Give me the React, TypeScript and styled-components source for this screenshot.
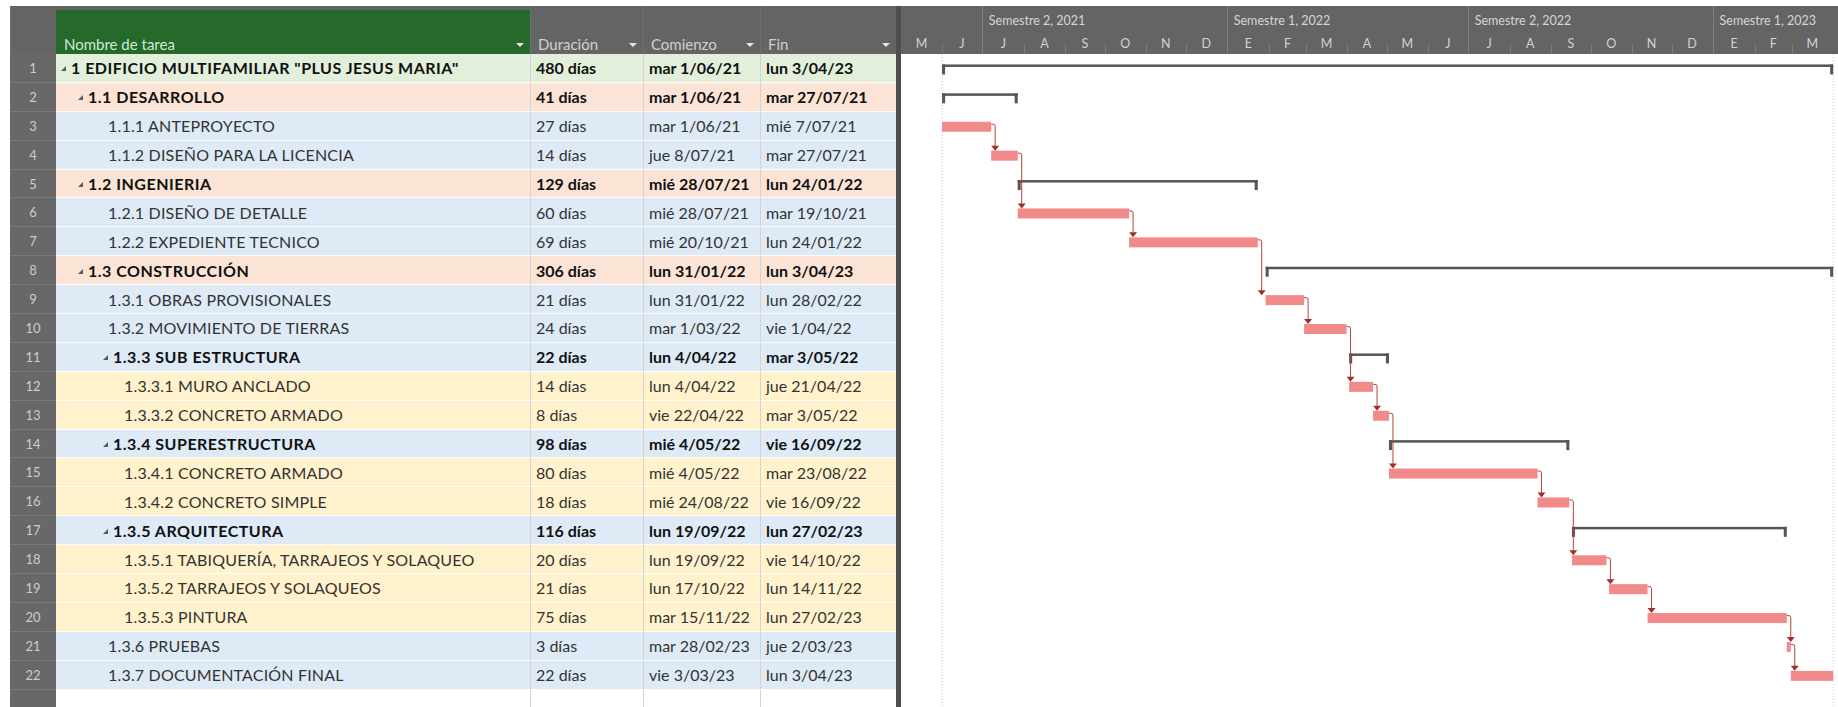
import React from "react";
import styled, { createGlobalStyle } from "styled-components";

const ROW_H = 28.9;
const HEAD_H = 48;
const DAY_W = 1.326;
const ORIGIN = Date.UTC(2021, 4, 1);
const COLS = "46px 474px 113px 117px 136px";

type Tone = "green" | "peach" | "blue" | "yellow";

const tones: Record<Tone, string> = {
  green: "#e2efda",
  peach: "#fbe4d6",
  blue: "#deeaf6",
  yellow: "#fff2cc",
};

interface ITask {
  name: string;
  level: number;
  summary?: boolean;
  dur: string;
  start: string;
  end: string;
  tone: Tone;
}

const tasks: ITask[] = [
  { name: '1 EDIFICIO MULTIFAMILIAR "PLUS JESUS MARIA"', level: 1, summary: true, dur: "480 días", start: "mar 1/06/21", end: "lun 3/04/23", tone: "green" },
  { name: "1.1 DESARROLLO", level: 2, summary: true, dur: "41 días", start: "mar 1/06/21", end: "mar 27/07/21", tone: "peach" },
  { name: "1.1.1 ANTEPROYECTO", level: 3, dur: "27 días", start: "mar 1/06/21", end: "mié 7/07/21", tone: "blue" },
  { name: "1.1.2 DISEÑO PARA LA LICENCIA", level: 3, dur: "14 días", start: "jue 8/07/21", end: "mar 27/07/21", tone: "blue" },
  { name: "1.2 INGENIERIA", level: 2, summary: true, dur: "129 días", start: "mié 28/07/21", end: "lun 24/01/22", tone: "peach" },
  { name: "1.2.1 DISEÑO DE DETALLE", level: 3, dur: "60 días", start: "mié 28/07/21", end: "mar 19/10/21", tone: "blue" },
  { name: "1.2.2 EXPEDIENTE TECNICO", level: 3, dur: "69 días", start: "mié 20/10/21", end: "lun 24/01/22", tone: "blue" },
  { name: "1.3 CONSTRUCCIÓN", level: 2, summary: true, dur: "306 días", start: "lun 31/01/22", end: "lun 3/04/23", tone: "peach" },
  { name: "1.3.1 OBRAS PROVISIONALES", level: 3, dur: "21 días", start: "lun 31/01/22", end: "lun 28/02/22", tone: "blue" },
  { name: "1.3.2 MOVIMIENTO DE TIERRAS", level: 3, dur: "24 días", start: "mar 1/03/22", end: "vie 1/04/22", tone: "blue" },
  { name: "1.3.3 SUB ESTRUCTURA", level: 3, summary: true, dur: "22 días", start: "lun 4/04/22", end: "mar 3/05/22", tone: "blue" },
  { name: "1.3.3.1 MURO ANCLADO", level: 4, dur: "14 días", start: "lun 4/04/22", end: "jue 21/04/22", tone: "yellow" },
  { name: "1.3.3.2 CONCRETO ARMADO", level: 4, dur: "8 días", start: "vie 22/04/22", end: "mar 3/05/22", tone: "yellow" },
  { name: "1.3.4 SUPERESTRUCTURA", level: 3, summary: true, dur: "98 días", start: "mié 4/05/22", end: "vie 16/09/22", tone: "blue" },
  { name: "1.3.4.1 CONCRETO ARMADO", level: 4, dur: "80 días", start: "mié 4/05/22", end: "mar 23/08/22", tone: "yellow" },
  { name: "1.3.4.2 CONCRETO SIMPLE", level: 4, dur: "18 días", start: "mié 24/08/22", end: "vie 16/09/22", tone: "yellow" },
  { name: "1.3.5 ARQUITECTURA", level: 3, summary: true, dur: "116 días", start: "lun 19/09/22", end: "lun 27/02/23", tone: "blue" },
  { name: "1.3.5.1 TABIQUERÍA, TARRAJEOS Y SOLAQUEO", level: 4, dur: "20 días", start: "lun 19/09/22", end: "vie 14/10/22", tone: "yellow" },
  { name: "1.3.5.2 TARRAJEOS Y SOLAQUEOS", level: 4, dur: "21 días", start: "lun 17/10/22", end: "lun 14/11/22", tone: "yellow" },
  { name: "1.3.5.3 PINTURA", level: 4, dur: "75 días", start: "mar 15/11/22", end: "lun 27/02/23", tone: "yellow" },
  { name: "1.3.6 PRUEBAS", level: 3, dur: "3 días", start: "mar 28/02/23", end: "jue 2/03/23", tone: "blue" },
  { name: "1.3.7 DOCUMENTACIÓN FINAL", level: 3, dur: "22 días", start: "vie 3/03/23", end: "lun 3/04/23", tone: "blue" },
];

// finish-to-start links, by row index
const links: [number, number][] = [
  [2, 3], [3, 5], [5, 6], [6, 8], [8, 9], [9, 11], [11, 12],
  [12, 14], [14, 15], [15, 17], [17, 18], [18, 19], [19, 20], [20, 21],
];

const semesters = [
  { label: "", from: [2021, 5], months: ["M", "J"] },
  { label: "Semestre 2, 2021", from: [2021, 7], months: ["J", "A", "S", "O", "N", "D"] },
  { label: "Semestre 1, 2022", from: [2022, 1], months: ["E", "F", "M", "A", "M", "J"] },
  { label: "Semestre 2, 2022", from: [2022, 7], months: ["J", "A", "S", "O", "N", "D"] },
  { label: "Semestre 1, 2023", from: [2023, 1], months: ["E", "F", "M"] },
];

const dayOf = (s: string) => {
  const [d, m, y] = s.split(" ")[1].split("/").map(Number);
  return (Date.UTC(2000 + y, m - 1, d) - ORIGIN) / 86400000;
};

const monthDays = (y: number, m: number) =>
  (Date.UTC(y, m, 1) - Date.UTC(y, m - 1, 1)) / 86400000;

// text start inside the name column, per outline level
const leafPad: Record<number, number> = { 3: 52, 4: 68 };
const summaryPad: Record<number, number> = { 1: 15, 2: 32, 3: 57 };

const GlobalStyle = createGlobalStyle`
  body {
    margin: 0;
    background: #ffffff;
    font-family: Lato, "Open Sans", sans-serif;
  }
`;

const Page = styled.div`
  display: flex;
  height: 707px;
  padding: 6px 0 0 10px;
  box-sizing: border-box;
  overflow: hidden;
`;

const Sheet = styled.div`
  display: flex;
  flex-direction: column;
  width: 886px;
  flex: none;
`;

const HeadRow = styled.div`
  display: grid;
  grid-template-columns: ${COLS};
  height: ${HEAD_H}px;
  background: #646464;
`;

const HeadCell = styled.div<{ $active?: boolean }>`
  display: flex;
  align-items: flex-end;
  justify-content: space-between;
  margin-top: ${(p) => (p.$active ? "4px" : "0")};
  padding: 0 6px 1px 7px;
  background: ${(p) => (p.$active ? "#25692b" : "transparent")};
  color: ${(p) => (p.$active ? "#d3e8d3" : "#d0d0d0")};
  border-left: 1px solid ${(p) => (p.$active ? "#25692b" : "#707070")};
  font-size: 15px;
`;

const Caret = styled.span`
  width: 0;
  height: 0;
  margin-bottom: 6px;
  border-left: 4px solid transparent;
  border-right: 4px solid transparent;
  border-top: 4px solid #e4e4e4;
`;

const Row = styled.div<{ $tone: Tone }>`
  display: grid;
  grid-template-columns: ${COLS};
  height: ${ROW_H}px;
  background: ${(p) => tones[p.$tone]};
`;

const NumCell = styled.div`
  display: flex;
  align-items: center;
  justify-content: center;
  background: #686868;
  color: #cdcdcd;
  font-size: 13px;
  border-bottom: 1px solid #7a7a7a;
`;

const Cell = styled.div<{ $bold?: boolean }>`
  display: flex;
  align-items: center;
  padding-left: 5px;
  border-left: 1px solid #d3d3d3;
  border-bottom: 1px solid rgba(255, 255, 255, 0.8);
  color: ${(p) => (p.$bold ? "#111" : "#333")};
  font-size: 16px;
  font-weight: ${(p) => (p.$bold ? 700 : 400)};
  white-space: nowrap;
  overflow: hidden;
`;

const NameCell = styled(Cell)<{ $pad: number }>`
  padding-left: ${(p) => p.$pad}px;
  border-left: none;
  letter-spacing: ${(p) => (p.$bold ? "0.5px" : "0.18px")};
`;

const Toggle = styled.span`
  width: 0;
  height: 0;
  margin: 2px 5px 0 0;
  border-left: 5px solid transparent;
  border-bottom: 5px solid #5a5a5a;
`;

const Filler = styled.div`
  display: grid;
  grid-template-columns: ${COLS};
  flex: 1;
  background: #ffffff;
`;

const FillNum = styled.div`
  background: #686868;
`;

const FillCell = styled.div<{ $first?: boolean }>`
  border-left: ${(p) => (p.$first ? "none" : "1px solid #d3d3d3")};
`;

const Divider = styled.div`
  width: 5px;
  flex: none;
  background: #4e4e4e;
`;

const Timeline = styled.div`
  display: flex;
  flex-direction: column;
  flex: 1;
  min-width: 0;
  overflow: hidden;
`;

const Scale = styled.div`
  display: flex;
  height: ${HEAD_H}px;
  flex: none;
  background: #646464;
`;

const Semester = styled.div<{ $first?: boolean }>`
  display: flex;
  flex-direction: column;
  flex: none;
  border-left: ${(p) => (p.$first ? "none" : "1px solid #7e7e7e")};
`;

const SemesterLabel = styled.div`
  height: 24px;
  padding: 7px 0 0 6px;
  box-sizing: border-box;
  color: #d6d6d6;
  font-size: 12.5px;
  white-space: nowrap;
`;

const MonthRow = styled.div`
  display: flex;
  height: 24px;
`;

const Month = styled.div<{ $tick: boolean }>`
  flex: none;
  display: flex;
  align-items: center;
  justify-content: center;
  padding-top: 3px;
  box-sizing: border-box;
  color: #d2d2d2;
  font-size: 12.5px;
  background: ${(p) =>
    p.$tick
      ? "linear-gradient(#7c7c7c, #7c7c7c) left bottom / 1px 10px no-repeat"
      : "none"};
`;

const Chart = styled.svg`
  display: block;
  flex: 1;
`;

function Gantt() {
  const height = 707 - 6 - HEAD_H;
  const mid = (i: number) => i * ROW_H + ROW_H / 2;
  const startX = dayOf("mar 1/06/21") * DAY_W;
  const endX = (dayOf("lun 3/04/23") + 1) * DAY_W;

  return (
    <Chart width={937} height={height}>
      <line x1={startX} y1={0} x2={startX} y2={height} stroke="#c9c9c9" strokeDasharray="1 2" />
      <line x1={endX} y1={0} x2={endX} y2={height} stroke="#c9c9c9" strokeDasharray="1 2" />
      {tasks.map((t, i) => {
        const x1 = dayOf(t.start) * DAY_W;
        const x2 = (dayOf(t.end) + 1) * DAY_W;
        const c = mid(i);
        if (t.summary) {
          return (
            <g key={i} fill="#555555">
              <rect x={x1} y={c - 4} width={x2 - x1} height={2.5} />
              <rect x={x1} y={c - 4} width={3} height={10} />
              <rect x={x2 - 3} y={c - 4} width={3} height={10} />
            </g>
          );
        }
        return <rect key={i} x={x1} y={c - 4.5} width={Math.max(x2 - x1, 3)} height={10} fill="#f28a8a" />;
      })}
      {links.map(([a, b]) => {
        const xe = (dayOf(tasks[a].end) + 1) * DAY_W;
        const lx = xe + 4;
        const ya = mid(a);
        const yb = mid(b) - 4.5;
        return (
          <g key={`${a}-${b}`}>
            <path d={`M${xe} ${ya - 2} L${lx - 2} ${ya - 2} Q${lx} ${ya - 2} ${lx} ${ya} L${lx} ${yb - 4}`} stroke="#b3423e" strokeWidth={1} fill="none" />
            <polygon points={`${lx - 4},${yb - 5} ${lx + 4},${yb - 5} ${lx},${yb}`} fill="#a32e2a" />
          </g>
        );
      })}
    </Chart>
  );
}

function ScaleHeader() {
  return (
    <Scale>
      {semesters.map((s, si) => (
        <Semester key={si} $first={si === 0}>
          <SemesterLabel>{s.label}</SemesterLabel>
          <MonthRow>
            {s.months.map((m, mi) => {
              const total = s.from[1] - 1 + mi;
              const y = s.from[0] + Math.floor(total / 12);
              const mo = (total % 12) + 1;
              return (
                <Month key={mi} $tick={mi > 0} style={{ width: monthDays(y, mo) * DAY_W }}>
                  {m}
                </Month>
              );
            })}
          </MonthRow>
        </Semester>
      ))}
    </Scale>
  );
}

export default function App() {
  return (
    <>
      <GlobalStyle />
      <Page>
        <Sheet>
          <HeadRow>
            <HeadCell />
            <HeadCell $active>
              Nombre de tarea <Caret />
            </HeadCell>
            <HeadCell>
              Duración <Caret />
            </HeadCell>
            <HeadCell>
              Comienzo <Caret />
            </HeadCell>
            <HeadCell>
              Fin <Caret />
            </HeadCell>
          </HeadRow>
          {tasks.map((t, i) => (
            <Row key={i} $tone={t.tone}>
              <NumCell>{i + 1}</NumCell>
              <NameCell
                $bold={t.summary}
                $pad={t.summary ? summaryPad[t.level] - 10 : leafPad[t.level]}
              >
                {t.summary && <Toggle />}
                {t.name}
              </NameCell>
              <Cell $bold={t.summary}>{t.dur}</Cell>
              <Cell $bold={t.summary}>{t.start}</Cell>
              <Cell $bold={t.summary}>{t.end}</Cell>
            </Row>
          ))}
          <Filler>
            <FillNum />
            <FillCell $first />
            <FillCell />
            <FillCell />
            <FillCell />
          </Filler>
        </Sheet>
        <Divider />
        <Timeline>
          <ScaleHeader />
          <Gantt />
        </Timeline>
      </Page>
    </>
  );
}
